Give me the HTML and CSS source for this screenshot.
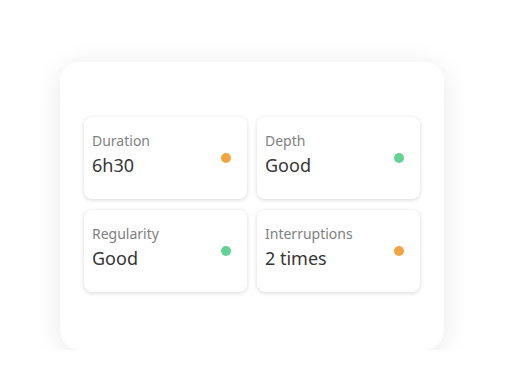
FILE: index.html
```html
<!DOCTYPE html>
<html lang="en">

<head>
    <meta charset="UTF-8">
    <meta name="viewport" content="width=device-width, initial-scale=1.0">
    <title>Sleep summary</title>
    <link rel="stylesheet" href="styles.css">
</head>

<body>
    <section class="card">
        <div class="stat">
            <div class="stat-text">
                <span class="label">Duration</span>
                <span class="value">6h30</span>
            </div>
            <span class="dot orange"></span>
        </div>
        <div class="stat">
            <div class="stat-text">
                <span class="label">Depth</span>
                <span class="value">Good</span>
            </div>
            <span class="dot green"></span>
        </div>
        <div class="stat">
            <div class="stat-text">
                <span class="label">Regularity</span>
                <span class="value">Good</span>
            </div>
            <span class="dot green"></span>
        </div>
        <div class="stat">
            <div class="stat-text">
                <span class="label">Interruptions</span>
                <span class="value">2 times</span>
            </div>
            <span class="dot orange"></span>
        </div>
    </section>
</body>

</html>
```

FILE: styles.css
```css
body {
    margin: 0;
    background: #fff;
    font-family: "Noto Sans", sans-serif;
}

.card {
    margin: 62px 0 0 60px;
    width: 384px;
    height: 288px;
    box-sizing: border-box;
    padding: 55px 24px 0;
    border-radius: 20px;
    background: #fff;
    box-shadow: 0 4px 28px rgba(0, 0, 0, 0.09);
    display: grid;
    grid-template-columns: 1fr 1fr;
    grid-template-rows: 82px 82px;
    column-gap: 10px;
    row-gap: 11px;
    align-content: start;
}

.stat {
    display: flex;
    justify-content: space-between;
    align-items: center;
    padding: 0 16px 0 8px;
    border-radius: 8px;
    background: #fff;
    box-shadow: 0 1px 4px rgba(0, 0, 0, 0.16);
}

.stat-text {
    display: flex;
    flex-direction: column;
    gap: 3px;
    margin-bottom: 8px;
}

.label {
    font-size: 14px;
    line-height: 19px;
    color: #7f7f7f;
}

.value {
    font-size: 18px;
    line-height: 24px;
    color: #363636;
}

.dot {
    width: 10px;
    height: 10px;
    border-radius: 50%;
}

.orange {
    background: #f3a541;
}

.green {
    background: #63d393;
}
```
